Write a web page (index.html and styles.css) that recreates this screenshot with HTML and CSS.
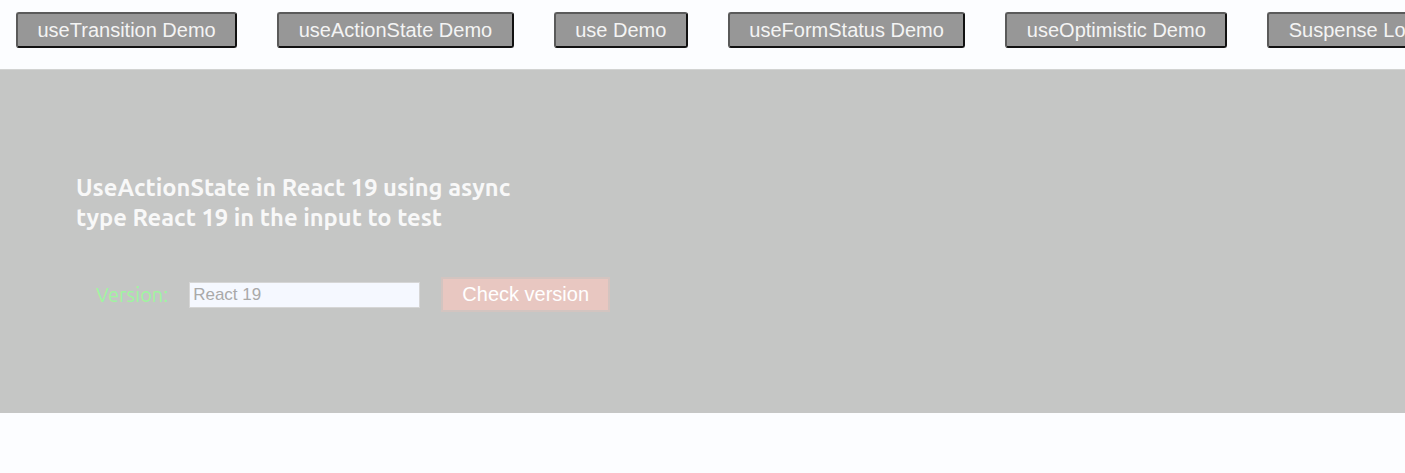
FILE: index.html
```html
<!DOCTYPE html>
<html lang="en">
<head>
<meta charset="utf-8">
<title>React 19 Demos</title>
<link rel="stylesheet" href="styles.css">
</head>
<body>
  <nav class="nav">
    <button class="nav-btn">useTransition Demo</button>
    <button class="nav-btn">useActionState Demo</button>
    <button class="nav-btn">use Demo</button>
    <button class="nav-btn">useFormStatus Demo</button>
    <button class="nav-btn">useOptimistic Demo</button>
    <button class="nav-btn">Suspense Loading Demo</button>
  </nav>
  <main class="panel">
    <h2 class="title">UseActionState in React 19 using async<br>type React 19 in the input to test</h2>
    <form class="form">
      <label class="label" for="ver">Version:</label>
      <input class="input" id="ver" type="text" placeholder="React 19">
      <button class="check" type="button">Check version</button>
    </form>
  </main>
</body>
</html>
```
FILE: styles.css
```css
html, body {
  margin: 0;
  padding: 0;
  background: #fcfdff;
  overflow: hidden;
}
body {
  width: 1405px;
  height: 473px;
  font-family: "Liberation Sans", Arial, sans-serif;
}
.nav {
  display: flex;
  flex-wrap: nowrap;
  gap: 40px;
  padding: 12px 16px 0;
  height: 69px;
  box-sizing: border-box;
  white-space: nowrap;
}
.nav-btn {
  flex: none;
  height: 36px;
  padding: 0 19.5px;
  background: #979797;
  color: #f4f4f4;
  font-family: "Liberation Sans", Arial, sans-serif;
  font-size: 20px;
  border: 2px solid;
  border-color: #5a5a5a #111 #111 #5a5a5a;
  border-radius: 3px;
}
.panel {
  background: #c5c6c5;
  border-top: 1px solid #d2d3d2;
  height: 344px;
  box-sizing: border-box;
  padding: 102px 0 0 76px;
}
.title {
  margin: 0;
  font-family: "Ubuntu", "Noto Sans", sans-serif;
  font-weight: 700;
  font-size: 23.7px;
  line-height: 30px;
  color: #f8f8f8;
}
.form {
  display: flex;
  align-items: center;
  margin-top: 45px;
  padding-left: 20px;
}
.label {
  font-family: "Ubuntu", "Noto Sans", sans-serif;
  font-size: 20px;
  color: #9ff59f;
  margin-right: 21px;
}
.input {
  width: 231px;
  height: 26px;
  box-sizing: border-box;
  border: 1px solid #d6d6d6;
  background: #f5f8ff;
  padding: 0 3px;
  font-family: "Liberation Sans", Arial, sans-serif;
  font-size: 17px;
  color: #555;
  margin-right: 21px;
}
.input::placeholder {
  color: #a9a9a9;
}
.check {
  width: 169px;
  height: 35px;
  box-sizing: border-box;
  background: #e8c7c1;
  border: 2px solid #d3c4c0;
  color: #ffffff;
  font-family: "Liberation Sans", Arial, sans-serif;
  font-size: 20px;
  padding: 0;
}
```
